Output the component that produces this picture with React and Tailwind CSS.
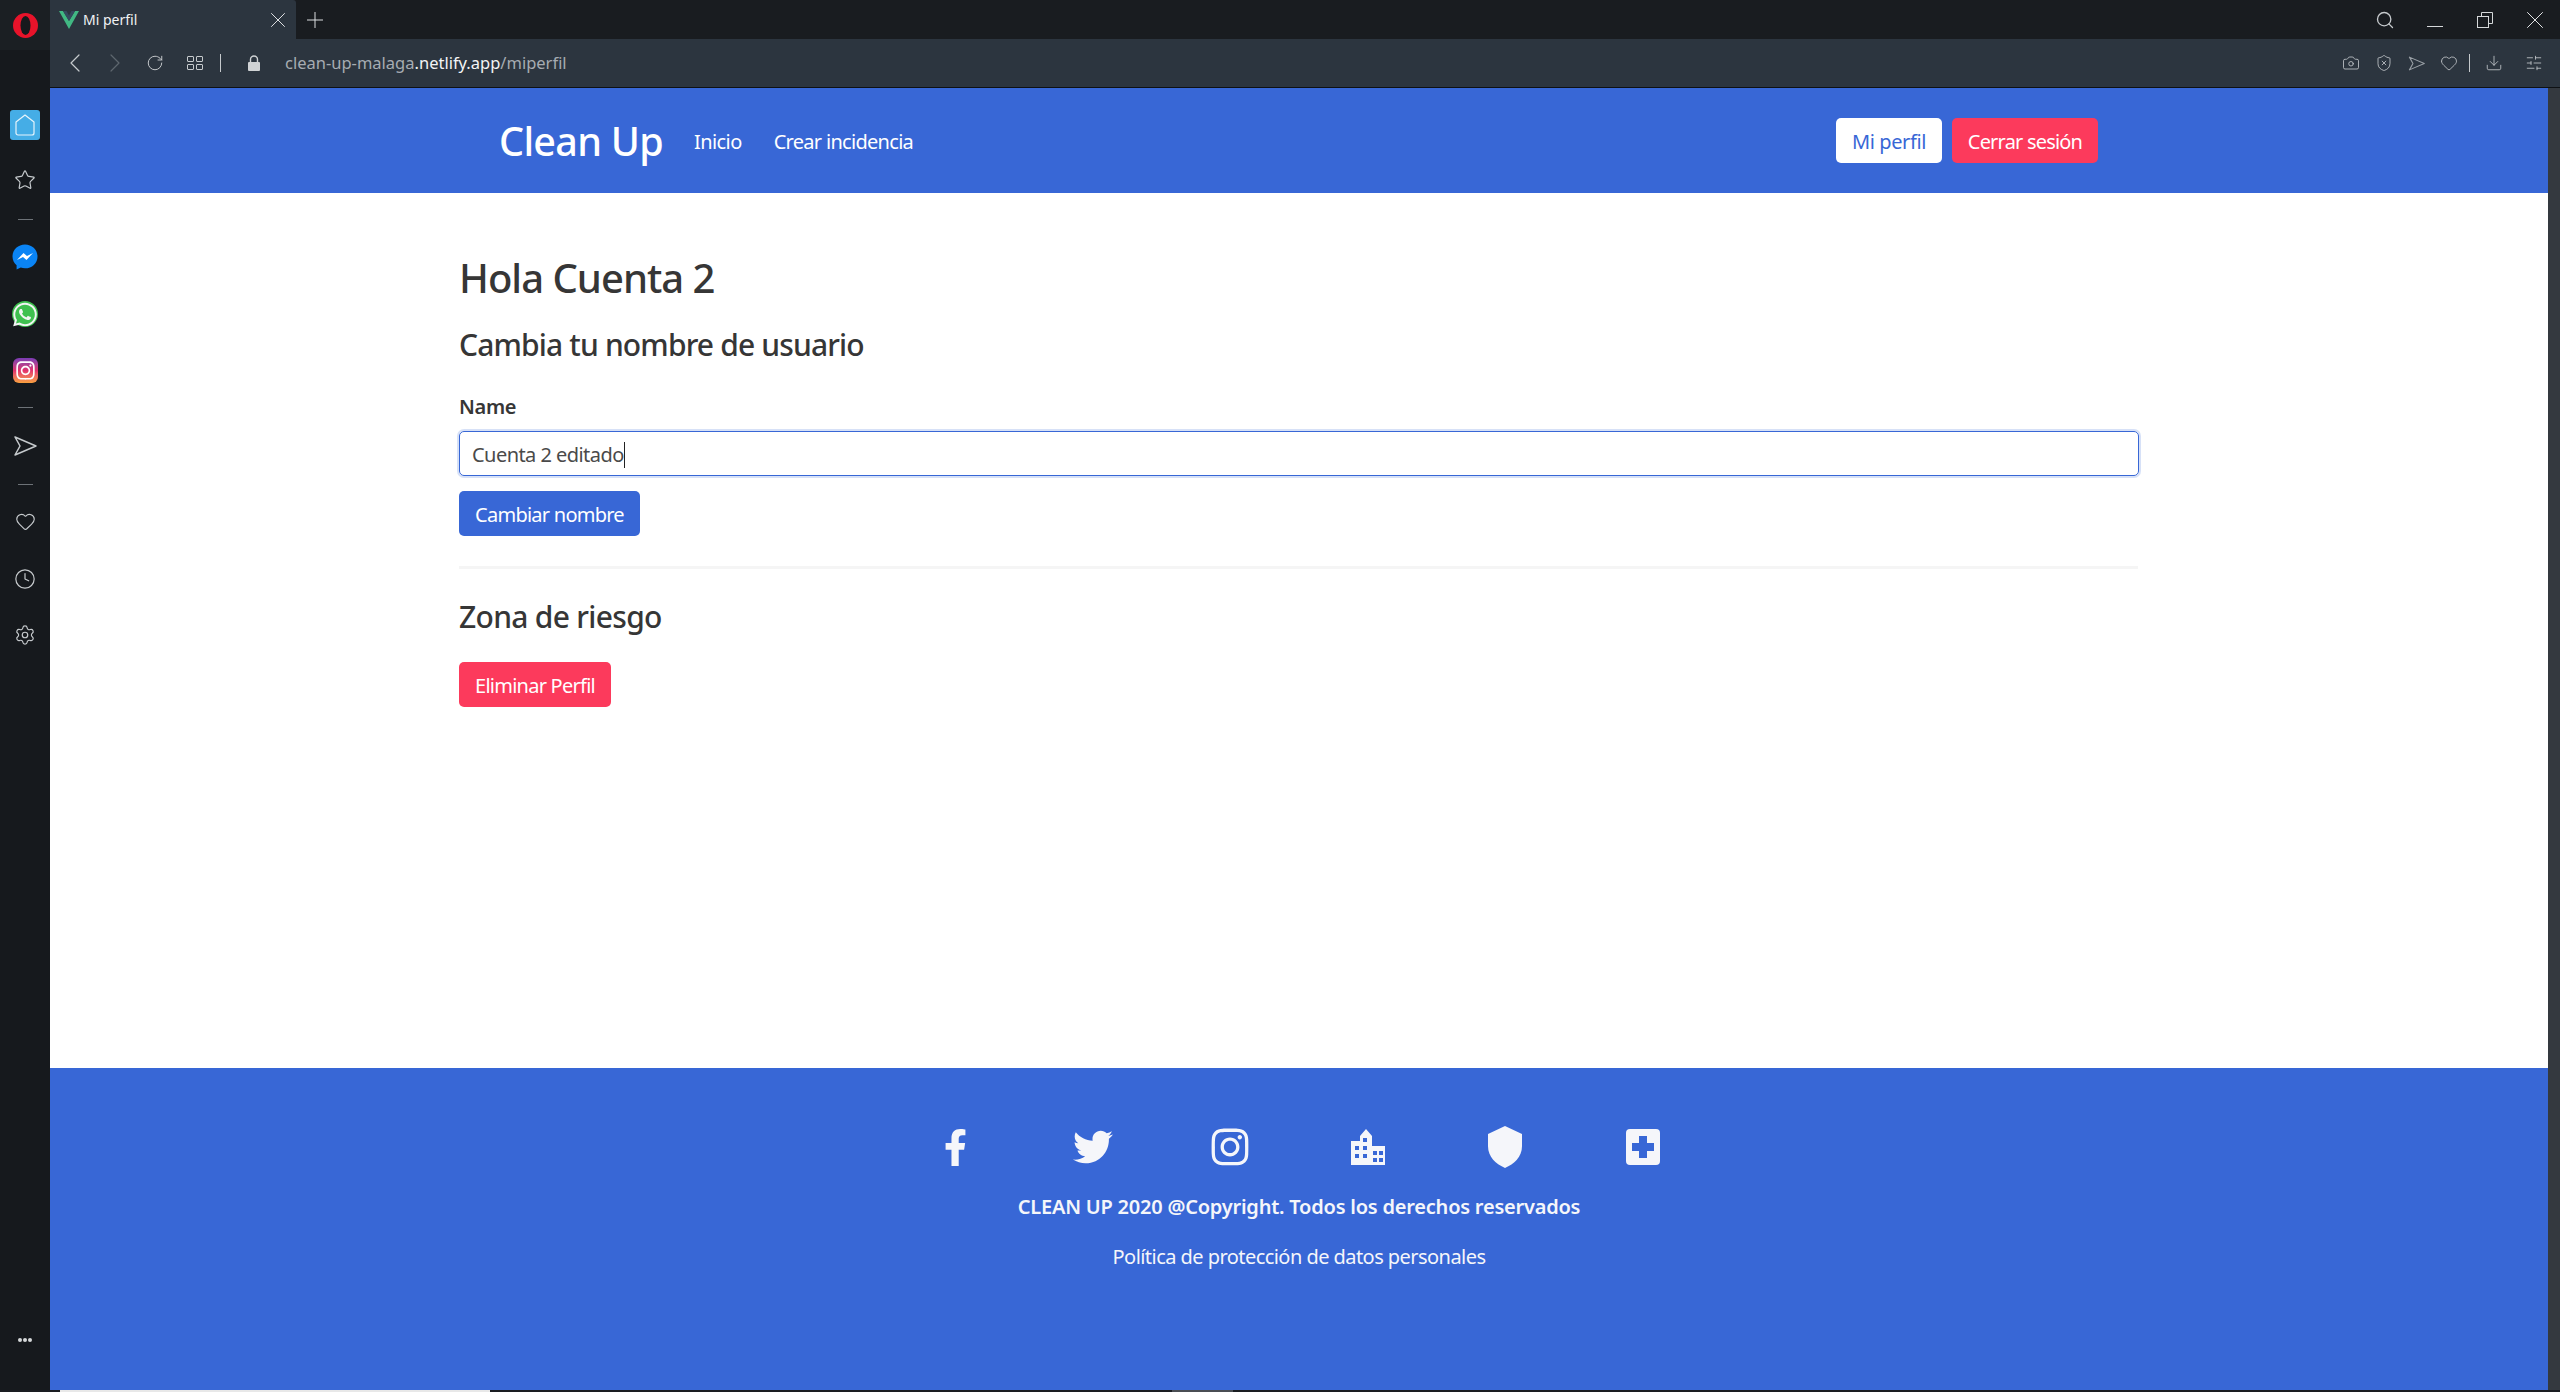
import React from 'react';
import { ChevronLeft, ChevronRight, RotateCw, Search, X, Plus, Camera, ShieldX, Heart, Download, SlidersHorizontal, Clock, Settings, Star } from 'lucide-react';
import { FaFacebookF, FaTwitter, FaInstagram, FaWhatsapp } from 'react-icons/fa';

const SendIcon = ({ size = 18, color = '#c6cacd' }) => (
  <svg width={size} height={size} viewBox="0 0 24 24" fill="none" stroke={color} strokeWidth="1.5" strokeLinejoin="round">
    <path d="M2 3 L23 12 L2 21 L7 12 Z" />
  </svg>
);

const RestoreIcon = () => (
  <svg width="16" height="16" viewBox="0 0 16 16" fill="none" stroke="#d5d8da" strokeWidth="1">
    <rect x="0.5" y="4.5" width="11" height="11" />
    <path d="M4.5 4.5 V0.5 H15.5 V11.5 H11.5" />
  </svg>
);

const GridIcon = () => (
  <svg width="16" height="16" viewBox="0 0 16 16" fill="none" stroke="#c6cacd" strokeWidth="1">
    <rect x="0.5" y="1.5" width="6" height="5" rx="0.5" />
    <rect x="9.5" y="1.5" width="6" height="5" rx="0.5" />
    <rect x="0.5" y="9.5" width="6" height="5" rx="0.5" />
    <rect x="9.5" y="9.5" width="6" height="5" rx="0.5" />
  </svg>
);

const LockIcon = () => (
  <svg width="12" height="16" viewBox="0 0 12 16">
    <path d="M2.5 7 V4.5 a3.5 3.5 0 0 1 7 0 V7" fill="none" stroke="#d0d3d5" strokeWidth="1.4" />
    <rect x="0" y="7" width="12" height="9" rx="1" fill="#d0d3d5" />
  </svg>
);

const VueIcon = () => (
  <svg width="20" height="18" viewBox="0 0 20 18">
    <path d="M0 0 H4 L10 10 L16 0 H20 L10 18 Z" fill="#41b883" />
    <path d="M4 0 H7.5 L10 4.5 L12.5 0 H16 L10 10 Z" fill="#35495e" />
  </svg>
);

const OperaLogo = () => (
  <svg width="25" height="25" viewBox="0 0 25 25">
    <circle cx="12.5" cy="12.5" r="12.5" fill="#e8132a" />
    <ellipse cx="12.5" cy="12.5" rx="5" ry="9.5" fill="#16191d" />
  </svg>
);

const HomeIcon = () => (
  <svg width="20" height="22" viewBox="0 0 20 22" fill="none" stroke="#e6f4fb" strokeWidth="1.2" strokeLinejoin="round">
    <path d="M1 8 L10 1 L19 8 V19 a2 2 0 0 1 -2 2 H3 a2 2 0 0 1 -2 -2 Z" />
  </svg>
);

const MessengerIcon = () => (
  <svg width="26" height="26" viewBox="0 0 26 26">
    <path d="M13 0.5 C6 0.5 0.5 5.7 0.5 12.4 C0.5 16 2.1 19.1 4.6 21.2 V25.5 L8.8 23.6 C10.1 24 11.5 24.3 13 24.3 C20 24.3 25.5 19.1 25.5 12.4 C25.5 5.7 20 0.5 13 0.5 Z" fill="#0a84f5" />
    <path d="M5 16 L11.5 9 L15 12 L21 9 L14.5 16 L11 13 Z" fill="#fff" />
  </svg>
);

const InstagramBadge = () => (
  <div className="w-[25px] h-[25px] rounded-[6px] flex items-center justify-center bg-gradient-to-b from-[#7a3ab5] via-[#e1306c] to-[#f9a03c]">
    <FaInstagram size={21} color="#fff" />
  </div>
);

const BuildingIcon = () => (
  <svg width="34" height="36" viewBox="0 0 34 36" fill="#f5f6fa">
    <path fillRule="evenodd" d="M0 36 V12 H9 V7 L15 0 L21 7 V17 H34 V36 Z M4 17 V21 H8 V17 Z M12 17 V21 H16 V17 Z M12 9 V13 H16 V9 Z M4 25 V29 H8 V25 Z M12 25 V29 H16 V25 Z M22 22 V26 H26 V22 Z M28 22 V26 H32 V22 Z M22 29 V33 H26 V29 Z M28 29 V33 H32 V29 Z" />
  </svg>
);

const ShieldIcon = () => (
  <svg width="34" height="42" viewBox="0 0 34 42" fill="#f5f6fa">
    <path d="M17 0 L34 8 V20 C34 31 26 38 17 42 C8 38 0 31 0 20 V8 Z" />
  </svg>
);

const PlusBoxIcon = () => (
  <svg width="34" height="36" viewBox="0 0 34 36">
    <rect width="34" height="36" rx="4" fill="#f5f6fa" />
    <path d="M13 7 H21 V14 H28 V22 H21 V29 H13 V22 H6 V14 H13 Z" fill="#3867d6" />
  </svg>
);

const SideSep = ({ className }) => <div className={`w-[15px] h-px bg-[#6d7277] ${className}`} />;

function Sidebar() {
  return (
    <aside className="w-[50px] shrink-0 bg-[#16191d] flex flex-col items-center">
      <div className="w-full h-[50px] bg-[#1b1f23] flex items-center justify-center">
        <OperaLogo />
      </div>
      <div className="mt-[60px] w-[30px] h-[30px] rounded-[3px] bg-[#45ade6] flex items-center justify-center">
        <HomeIcon />
      </div>
      <Star size={22} strokeWidth={1.3} color="#c6cacd" className="mt-[29px]" />
      <SideSep className="mt-[28px]" />
      <div className="mt-[24px] h-[26px]"><MessengerIcon /></div>
      <div className="mt-[31px] w-[26px] h-[26px] rounded-full bg-[#3fc04f] flex items-center justify-center">
        <FaWhatsapp size={27} color="#f2f4f3" />
      </div>
      <div className="mt-[31px]"><InstagramBadge /></div>
      <SideSep className="mt-[24px]" />
      <div className="mt-[26px]"><SendIcon size={24} /></div>
      <SideSep className="mt-[26px]" />
      <Heart size={21} strokeWidth={1.3} color="#c6cacd" className="mt-[26px]" />
      <Clock size={22} strokeWidth={1.3} color="#c6cacd" className="mt-[36px]" />
      <Settings size={22} strokeWidth={1.3} color="#c6cacd" className="mt-[34px]" />
      <div className="mt-auto mb-[48px] flex gap-[1px]">
        <div className="w-[4px] h-[4px] rounded-full bg-[#d5d8da]" />
        <div className="w-[4px] h-[4px] rounded-full bg-[#d5d8da]" />
        <div className="w-[4px] h-[4px] rounded-full bg-[#d5d8da]" />
      </div>
    </aside>
  );
}

function TabBar() {
  return (
    <div className="h-[39px] bg-[#191c20] flex items-stretch shrink-0">
      <div className="w-[246px] bg-[#2c353f] rounded-tr-[3px] flex items-center pl-[9px] pr-[5px]">
        <VueIcon />
        <span className="ml-[4px] text-[14px] text-[#f1f2f3] flex-1">Mi perfil</span>
        <X size={26} strokeWidth={0.9} color="#e2e4e6" />
      </div>
      <div className="ml-[6px] flex items-center">
        <Plus size={26} strokeWidth={0.9} color="#e2e4e6" />
      </div>
      <div className="ml-auto flex items-center pr-[10px]">
        <Search size={20} strokeWidth={1.6} color="#c6cacd" className="mr-[32px]" />
        <div className="w-[16px] h-[1px] bg-[#d5d8da] mt-[14px] mr-[34px]" />
        <div className="mr-[27px]"><RestoreIcon /></div>
        <X size={30} strokeWidth={0.8} color="#e2e4e6" />
      </div>
    </div>
  );
}

function AddressBar() {
  return (
    <div className="h-[49px] bg-[#2c353f] border-b border-[#0e1114] flex items-center shrink-0 pl-[9px] pr-[17px]">
      <ChevronLeft size={32} strokeWidth={0.9} color="#c6cacd" />
      <ChevronRight size={32} strokeWidth={0.9} color="#5e666e" className="ml-[8px]" />
      <RotateCw size={18} strokeWidth={1.3} color="#c6cacd" className="ml-[15px]" />
      <div className="ml-[23px]"><GridIcon /></div>
      <div className="ml-[17px] w-px h-[18px] bg-[#c6cacd]" />
      <div className="ml-[27px] flex items-center"><LockIcon /></div>
      <div className="ml-[25px] text-[16.5px] text-[#a6acb2]">
        clean-up-malaga<span className="text-[#f3f4f5]">.netlify.app</span>/miperfil
      </div>
      <div className="ml-auto flex items-center text-[#c6cacd]">
        <Camera size={18} strokeWidth={1.1} />
        <ShieldX size={18} strokeWidth={1.1} className="ml-[15px]" />
        <div className="ml-[15px]"><SendIcon size={17} color="#9aa0a6" /></div>
        <Heart size={18} strokeWidth={1.1} className="ml-[15px]" />
        <div className="ml-[11px] w-px h-[18px] bg-[#c6cacd]" />
        <Download size={18} strokeWidth={1.1} className="ml-[15px]" />
        <SlidersHorizontal size={18} strokeWidth={1.1} className="ml-[22px]" />
      </div>
    </div>
  );
}

function Navbar() {
  return (
    <header className="h-[105px] shrink-0 bg-[#3867d6] flex items-center pl-[449px] pr-[450px] text-white">
      <div className="text-[39.5px] font-medium leading-none tracking-[-0.7px] pt-[2px]">Clean Up</div>
      <a className="ml-[31px] text-[20px] tracking-[-0.6px] pt-[2px]">Inicio</a>
      <a className="ml-[32px] text-[20px] tracking-[-0.7px] pt-[2px]">Crear incidencia</a>
      <div className="ml-auto flex gap-[10px] text-[20px] tracking-[-0.4px]">
        <button className="h-[45px] w-[106px] rounded-[5px] bg-white text-[#3867d6] pt-[2px]">Mi perfil</button>
        <button className="h-[45px] w-[146px] rounded-[5px] bg-[#fc3a5c] text-white tracking-[-0.8px] pt-[2px]">Cerrar sesión</button>
      </div>
    </header>
  );
}

function Profile() {
  return (
    <main className="flex-1 bg-white pl-[409px] pr-[410px] pt-[61px] text-[#363636]">
      <h1 className="text-[40px] leading-[48px] font-medium tracking-[-1px]">Hola Cuenta 2</h1>
      <h2 className="mt-[23px] text-[30px] leading-[40px] font-medium tracking-[-0.85px]">Cambia tu nombre de usuario</h2>
      <label className="block mt-[27px] text-[20px] leading-[30px] font-semibold tracking-[-0.3px]">Name</label>
      <div className="mt-[9px] mr-[-1px] h-[45px] rounded-[5px] border border-[#3867d6] ring-[2px] ring-[#3867d6]/20 flex items-center pl-[12px] pt-[2px] text-[20px] tracking-[-0.55px] text-[#4a4a4a]">
        Cuenta 2 editado<span className="w-px h-[26px] bg-[#222]" />
      </div>
      <button className="block mt-[15px] h-[45px] w-[181px] rounded-[5px] bg-[#3867d6] text-white text-[20px] tracking-[-0.75px] pt-[2px]">Cambiar nombre</button>
      <hr className="mt-[30px] h-[3px] border-0 bg-[#f5f5f5]" />
      <h2 className="mt-[28px] text-[30px] leading-[40px] font-medium tracking-[-0.7px]">Zona de riesgo</h2>
      <button className="block mt-[25px] h-[45px] w-[152px] rounded-[5px] bg-[#fc3a5c] text-white text-[20px] tracking-[-0.75px] pt-[2px]">Eliminar Perfil</button>
    </main>
  );
}

function Footer() {
  const icons = [
    <FaFacebookF size={37} />,
    <FaTwitter size={40} />,
    <FaInstagram size={42} />,
    <BuildingIcon />,
    <ShieldIcon />,
    <PlusBoxIcon />,
  ];
  return (
    <footer className="h-[322px] shrink-0 bg-[#3867d6] pt-[57px] text-[#f5f6fa] text-center">
      <div className="h-[44px] flex justify-center">
        {icons.map((icon, i) => (
          <div key={i} className="w-[137.6px] flex items-center justify-center">{icon}</div>
        ))}
      </div>
      <p className="mt-[23px] text-[20px] leading-[30px] font-semibold tracking-[-0.22px]">CLEAN UP 2020 @Copyright. Todos los derechos reservados</p>
      <p className="mt-[20px] text-[20px] leading-[30px] tracking-[-0.55px]">Política de protección de datos personales</p>
    </footer>
  );
}

export default function App() {
  return (
    <div className="h-[1392px] w-[2560px] overflow-hidden flex flex-col bg-[#191c20] font-['Noto_Sans',sans-serif]">
      <div className="flex-1 flex min-h-0">
        <Sidebar />
        <div className="flex-1 flex flex-col min-w-0">
          <TabBar />
          <AddressBar />
          <div className="flex-1 flex min-h-0">
            <div className="flex-1 flex flex-col min-w-0">
              <Navbar />
              <Profile />
              <Footer />
            </div>
            <div className="w-[12px] shrink-0 bg-[#34393f]" />
          </div>
        </div>
      </div>
      <div className="h-[2px] shrink-0 bg-[#1a1d21] flex">
        <div className="ml-[60px] w-[430px] bg-[#e8e8e8]" />
        <div className="ml-[682px] w-[61px] bg-[#4a4e53]" />
      </div>
    </div>
  );
}
